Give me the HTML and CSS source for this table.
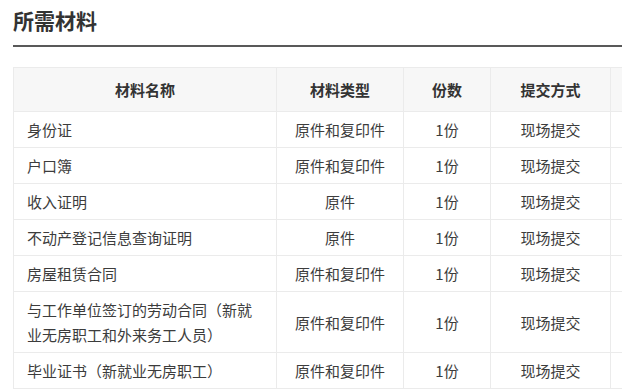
FILE: index.html
```html
<!DOCTYPE html>
<html lang="zh">
<head>
<meta charset="utf-8">
<link rel="stylesheet" href="styles.css">
</head>
<body>
<div class="page">
  <h2 class="title">所需材料</h2>
  <table class="materials">
    <colgroup>
      <col class="c-name"><col class="c-type"><col class="c-count"><col class="c-way"><col class="c-extra">
    </colgroup>
    <thead>
      <tr><th>材料名称</th><th>材料类型</th><th>份数</th><th>提交方式</th><th></th></tr>
    </thead>
    <tbody>
      <tr><td class="left">身份证</td><td>原件和复印件</td><td>1份</td><td>现场提交</td><td></td></tr>
      <tr><td class="left">户口簿</td><td>原件和复印件</td><td>1份</td><td>现场提交</td><td></td></tr>
      <tr><td class="left">收入证明</td><td>原件</td><td>1份</td><td>现场提交</td><td></td></tr>
      <tr><td class="left">不动产登记信息查询证明</td><td>原件</td><td>1份</td><td>现场提交</td><td></td></tr>
      <tr><td class="left">房屋租赁合同</td><td>原件和复印件</td><td>1份</td><td>现场提交</td><td></td></tr>
      <tr><td class="left">与工作单位签订的劳动合同（新就业无房职工和外来务工人员）</td><td>原件和复印件</td><td>1份</td><td>现场提交</td><td></td></tr>
      <tr><td class="left">毕业证书（新就业无房职工）</td><td>原件和复印件</td><td>1份</td><td>现场提交</td><td></td></tr>
    </tbody>
  </table>
</div>
</body>
</html>
```
FILE: styles.css
```css
html, body {
  margin: 0;
  padding: 0;
  background: #fff;
  overflow: hidden;
}
body {
  font-family: "Noto Sans CJK SC", "Noto Sans", sans-serif;
  color: #3c3c3c;
}
.page {
  padding: 0 0 0 13px;
  width: 760px;
}
.title {
  margin: 0;
  padding-top: 5px;
  height: 40px;
  line-height: 30px;
  font-size: 21px;
  font-weight: bold;
  color: #333;
  border-bottom: 2px solid #595959;
}
.materials {
  margin-top: 20px;
  border-collapse: collapse;
  table-layout: fixed;
  width: 717px;
  font-size: 15px;
}
.c-name { width: 263px; }
.c-type { width: 127px; }
.c-count { width: 87px; }
.c-way { width: 120px; }
.c-extra { width: 120px; }
.materials th,
.materials td {
  border: 1px solid #ebebeb;
  text-align: center;
  vertical-align: middle;
}
.materials th {
  background: #f7f7f7;
  color: #333;
  font-weight: bold;
  height: 43px;
  padding: 0 12px;
  line-height: 24px;
}
.materials td {
  height: 35px;
  padding: 5px 13px;
  line-height: 25px;
  box-sizing: border-box;
}
.materials td.left {
  text-align: left;
}
```
